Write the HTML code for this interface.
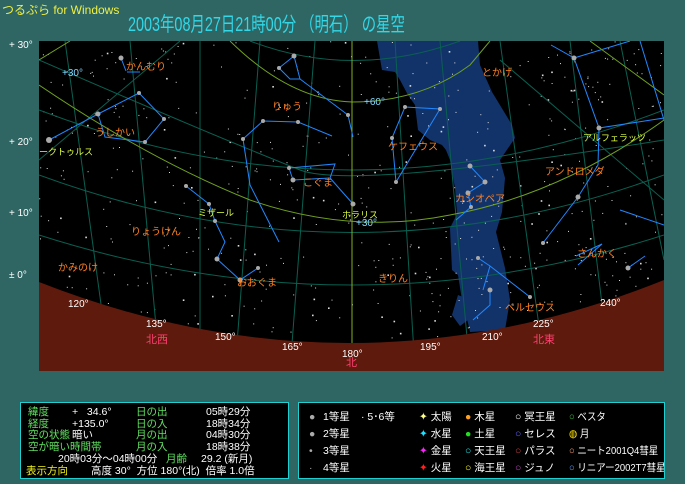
<!DOCTYPE html>
<html><head><meta charset="utf-8"><style>
*{margin:0;padding:0}
body{width:685px;height:484px;overflow:hidden;background:#2f6664;font-family:"Liberation Sans","Noto Sans CJK JP",sans-serif;position:relative}
.t{position:absolute;white-space:nowrap}
.p{position:absolute;background:#000;border:1px solid #20d0d0;box-sizing:border-box;overflow:hidden}
.l{font-size:10.5px;line-height:11.6px}
</style></head><body>
<div class="t" style="left:2px;top:1px;font-size:12px;color:#f0f040">つるぷら for Windows</div>
<div class="t" style="left:128px;top:8px;font-size:20px;color:#30d8e8;transform:scaleX(0.72);transform-origin:0 0">2003年08月27日21時00分 （明石） の星空</div>
<div class="t" style="left:9px;top:40px;font-size:10px;color:#fff">+ 30°</div>
<div class="t" style="left:9px;top:137px;font-size:10px;color:#fff">+ 20°</div>
<div class="t" style="left:9px;top:208px;font-size:10px;color:#fff">+ 10°</div>
<div class="t" style="left:9px;top:270px;font-size:10px;color:#fff">± 0°</div>
<svg id="m" style="position:absolute;left:39px;top:41px" width="625" height="330" viewBox="39 41 625 330">
<rect x="39" y="41" width="625" height="330" fill="#000"/>
<path d="M377,41 L478,41 L480,65 L492,92 L512,125 L515,138 L500,160 L505,178 L502,212 L496,232 L505,268 L510,300 L505,330 L470,332 L465,310 L462,300 L458,275 L452,270 L450,228 L457,214 L455,188 L450,160 L446,150 L442,145 L430,140 L418,130 L415,105 L408,95 L400,80 L395,72 L382,70 Z" fill="#12336a"/>
<path d="M458,295 L470,300 L468,320 L460,326 L452,315 Z" fill="#12336a"/>
<g id="stars" fill="#ddd"></g>
<g fill="none" stroke="#0a6050" stroke-width="1">
<path d="M39,110 Q352,230 664,110"/>
<path d="M39,175 Q352,290 664,175"/>
<path d="M39,235 Q352,335 664,235"/>
<path d="M250,41 Q352,80 460,41"/>
<path d="M39,60 Q200,130 300,170 Q352,190 664,140"/>
<path d="M65,41 L110,370"/><path d="M130,41 L160,370"/><path d="M200,41 L200,370"/><path d="M260,41 L235,370"/><path d="M315,41 L290,370"/>
<path d="M395,41 L415,370"/><path d="M440,41 L470,370"/><path d="M500,41 L545,370"/><path d="M570,41 L610,370"/><path d="M620,41 L664,260"/>
<path d="M39,160 L180,41"/><path d="M500,60 L664,200"/>
</g>
<g fill="none" stroke="#70a020" stroke-width="1">
<path d="M39,85 Q150,160 250,200 Q352,235 450,215 Q560,195 664,120"/>
<path d="M230,41 Q290,100 352,102 Q420,102 470,65 L490,41"/>
<path d="M39,60 L70,41"/><path d="M590,41 L664,95"/>
<path d="M352,41 L352,371" stroke="#80b020"/>
</g>
<g fill="none" stroke="#2088ff" stroke-width="1">
<path d="M121,58 L126,71 M127,72 L140,72"/>
<path d="M49,140 L98,114 L139,93 L164,119 L145,142 L105,137 L98,114"/>
<path d="M294,56 L279,68 L290,79 L300,79 L294,56 M300,79 L348,115 L353,137 M243,139 L263,121 L298,122 L332,136 M243,139 L250,185 L279,242"/>
<path d="M289,168 L293,180 L330,178 L335,164 L289,168 M330,178 L353,204"/>
<path d="M186,186 L209,204 L215,221 L225,242 L217,259 L240,280 L258,268"/>
<path d="M405,107 L440,109 L396,182 L392,138 L405,107"/>
<path d="M470,166 L485,182 L468,193 L471,207 L456,220"/>
<path d="M551,45 L574,58 L599,128 L598,165 L578,197 L543,243 M574,58 L630,41 M599,128 L664,118 M640,41 L664,120 M620,210 L664,225"/>
<path d="M576,256 L602,244 L578,265 M628,268 L645,256"/>
<path d="M478,258 L490,266 L530,297 M483,290 L490,266 M490,290 L490,305 L473,320"/>
</g>
<g fill="#aaa">
<circle cx="121" cy="58" r="2.5"/><circle cx="49" cy="140" r="3"/><circle cx="98" cy="114" r="2.5"/><circle cx="139" cy="93" r="2"/><circle cx="164" cy="119" r="2"/><circle cx="145" cy="142" r="2"/>
<circle cx="294" cy="56" r="2.5"/><circle cx="279" cy="68" r="2"/><circle cx="263" cy="121" r="2"/><circle cx="298" cy="122" r="2"/><circle cx="243" cy="139" r="2"/><circle cx="348" cy="115" r="2"/>
<circle cx="293" cy="180" r="2.5"/><circle cx="289" cy="168" r="2"/><circle cx="353" cy="204" r="2.5"/>
<circle cx="186" cy="186" r="2"/><circle cx="209" cy="204" r="2"/><circle cx="215" cy="221" r="2"/><circle cx="217" cy="259" r="2.5"/><circle cx="240" cy="280" r="2.5"/><circle cx="258" cy="268" r="2"/>
<circle cx="405" cy="107" r="2"/><circle cx="440" cy="109" r="2"/><circle cx="396" cy="182" r="2"/><circle cx="392" cy="138" r="2"/>
<circle cx="470" cy="166" r="2.5"/><circle cx="485" cy="182" r="2.5"/><circle cx="468" cy="193" r="2.5"/><circle cx="471" cy="207" r="2"/>
<circle cx="574" cy="58" r="2.5"/><circle cx="599" cy="128" r="2.5"/><circle cx="578" cy="197" r="2.5"/><circle cx="543" cy="243" r="2"/><circle cx="628" cy="268" r="2.5"/><circle cx="478" cy="258" r="2"/><circle cx="490" cy="290" r="2.5"/><circle cx="530" cy="297" r="2"/>
</g>
<path d="M39,282 Q352,405 664,280 L664,371 L39,371 Z" fill="#5e1a0c"/>
<g font-size="10" fill="#ff8020" font-family="Liberation Sans,Noto Sans CJK JP,sans-serif">
<text x="126" y="70">かんむり</text><text x="95" y="136">うしかい</text><text x="272" y="110">りゅう</text><text x="303" y="186">こぐま</text>
<text x="131" y="235">りょうけん</text><text x="58" y="271">かみのけ</text><text x="237" y="286">おおぐま</text><text x="378" y="282">きりん</text>
<text x="482" y="76">とかげ</text><text x="388" y="150">ケフェウス</text><text x="455" y="202">カシオペア</text><text x="545" y="175">アンドロメダ</text><text x="577" y="257">さんかく</text><text x="505" y="311">ペルセウス</text>
</g>
<g font-size="9" fill="#e0ff40" font-family="Liberation Sans,Noto Sans CJK JP,sans-serif">
<text x="39" y="155">ークトゥルス</text><text x="198" y="216">ミザール</text><text x="342" y="218">ホラリス</text><text x="583" y="141">アルフェラッツ</text>
</g>
<g font-size="10" fill="#80d8ff"><text x="62" y="76">+30°</text><text x="364" y="105">+60°</text><text x="356" y="226">+30°</text></g>
<g font-size="10" fill="#fff"><text x="68" y="307">120°</text><text x="146" y="327">135°</text><text x="215" y="340">150°</text><text x="282" y="350">165°</text><text x="342" y="357">180°</text><text x="420" y="350">195°</text><text x="482" y="340">210°</text><text x="533" y="327">225°</text><text x="600" y="306">240°</text></g>
<g font-size="11" fill="#ff4070" font-family="Liberation Sans,Noto Sans CJK JP,sans-serif"><text x="146" y="343">北西</text><text x="346" y="366">北</text><text x="533" y="343">北東</text></g>
</svg>
<div class="p" style="left:20px;top:402px;width:269px;height:77px">
<div class="l t" style="left:7px;top:4px;color:#60e060">緯度<br>経度<br>空の状態<br>空が暗い時間帯</div>
<div class="l t" style="left:51px;top:4px;color:#fff">+&nbsp;&nbsp;&nbsp;34.6°<br>+135.0°<br>暗い</div>
<div class="l t" style="left:115px;top:4px;color:#60e060">日の出<br>日の入<br>月の出<br>月の入</div>
<div class="l t" style="left:185px;top:4px;color:#fff">05時29分<br>18時34分<br>04時30分<br>18時38分</div>
<div class="l t" style="left:37px;top:51px;color:#fff">20時03分～04時00分</div>
<div class="l t" style="left:145px;top:51px;color:#60e060">月齢</div>
<div class="l t" style="left:180px;top:51px;color:#fff">29.2 (新月)</div>
<div class="l t" style="left:5px;top:63px;color:#f0f020">表示方向</div>
<div class="l t" style="left:70px;top:63px;color:#fff">高度 30°&nbsp; 方位 180°(北)&nbsp; 倍率 1.0倍</div>
</div>
<div class="p" style="left:298px;top:402px;width:367px;height:77px;font-size:10.5px;color:#fff">
<div class="t" style="left:10px;top:6px;line-height:17px;color:#aaa">●<br>●<br>•<br>·</div>
<div class="t" style="left:24px;top:6px;line-height:17px">1等星<br>2等星<br>3等星<br>4等星</div>
<div class="t" style="left:62px;top:6px">· 5･6等</div>
<div class="t" style="left:120px;top:6px;line-height:17px"><span style="color:#ffff80">✦</span> 太陽<br><span style="color:#20e0ff">✦</span> 水星<br><span style="color:#ff20ff">✦</span> 金星<br><span style="color:#ff2020">✦</span> 火星</div>
<div class="t" style="left:166px;top:6px;line-height:17px"><span style="color:#ffa020">●</span> 木星<br><span style="color:#20e020">●</span> 土星<br><span style="color:#20e0e0">○</span> 天王星<br><span style="color:#ffff20">○</span> 海王星</div>
<div class="t" style="left:216px;top:6px;line-height:17px">○ 冥王星<br><span style="color:#6060ff">○</span> セレス<br><span style="color:#c04040">○</span> パラス<br><span style="color:#c040c0">○</span> ジュノ</div>
<div class="t" style="left:270px;top:6px;line-height:17px;transform:scaleX(0.9);transform-origin:0 0"><span style="color:#40c040">○</span> ベスタ<br><span style="color:#ffe000">◍</span> 月<br><span style="color:#ffa070">○</span> ニート2001Q4彗星<br><span style="color:#60a0ff">○</span> リニアー2002T7彗星</div>
</div>
<script>
var g=document.getElementById('stars'),s=7,h='';
function r(){s=(s*16807)%2147483647;return s/2147483647}
for(var i=0;i<600;i++){var x=39+r()*625,y=41+r()*320,z=r()<0.85?1:1.6;h+='<rect x="'+x.toFixed(1)+'" y="'+y.toFixed(1)+'" width="'+z+'" height="'+z+'"/>'}
g.innerHTML=h;
</script>
</body></html>
